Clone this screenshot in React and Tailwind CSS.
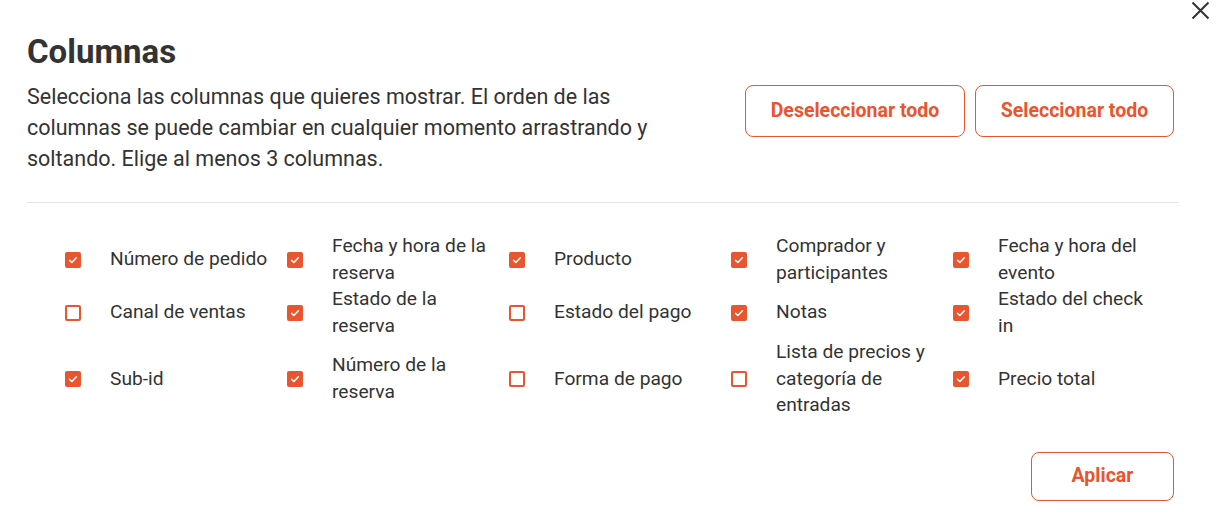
const columns = [
  { label: 'Número de pedido', checked: true },
  { label: 'Fecha y hora de la reserva', checked: true },
  { label: 'Producto', checked: true },
  { label: 'Comprador y participantes', checked: true },
  { label: 'Fecha y hora del evento', checked: true },
  { label: 'Canal de ventas', checked: false },
  { label: 'Estado de la reserva', checked: true },
  { label: 'Estado del pago', checked: false },
  { label: 'Notas', checked: true },
  { label: 'Estado del check in', checked: true },
  { label: 'Sub-id', checked: true },
  { label: 'Número de la reserva', checked: true },
  { label: 'Forma de pago', checked: false },
  { label: 'Lista de precios y categoría de entradas', checked: false },
  { label: 'Precio total', checked: true },
];

function Checkbox({ checked }) {
  if (checked) {
    return (
      <span className="flex h-4 w-4 shrink-0 items-center justify-center rounded-[2px] bg-[#e8552f]">
        <svg viewBox="0 0 16 16" className="h-3 w-3" fill="none" stroke="white" strokeWidth="2" strokeLinecap="round" strokeLinejoin="round">
          <path d="M3.5 8.5l3 2.8 6-6.3" />
        </svg>
      </span>
    );
  }
  return <span className="h-4 w-4 shrink-0 rounded-[2px] border-2 border-[#e8552f] bg-white" />;
}

export default function App() {
  return (
    <div className="relative h-[519px] w-[1217px] bg-white font-['Roboto',sans-serif] text-[#333]">
      <button className="absolute left-[1191px] top-[1px] text-[#333]">
        <svg width="19" height="19" viewBox="0 0 19 19" fill="none" stroke="currentColor" strokeWidth="2">
          <path d="M1.5 1.5l16 16M17.5 1.5l-16 16" />
        </svg>
      </button>

      <div className="pl-[27px] pr-[38px] pt-[32px]">
        <h1 className="text-[33px] font-bold leading-[40px] text-[#333]">Columnas</h1>

        <div className="mt-[9px] flex items-start justify-between">
          <p className="w-[650px] text-[21.5px] leading-[31px]">
            Selecciona las columnas que quieres mostrar. El orden de las columnas se puede cambiar en cualquier momento arrastrando y soltando. Elige al menos 3 columnas.
          </p>
          <div className="mr-[5px] mt-[4px] flex gap-[10px]">
            <button className="h-[52px] w-[220px] rounded-[8px] border border-[#e8552f] text-[19.5px] font-bold text-[#e8552f]">
              Deseleccionar todo
            </button>
            <button className="h-[52px] w-[199px] rounded-[8px] border border-[#e8552f] text-[19.5px] font-bold text-[#e8552f]">
              Seleccionar todo
            </button>
          </div>
        </div>

        <div className="mt-[28px] border-t border-[#e3e3e3]" />

        <div className="ml-[38px] mt-[30px] grid grid-cols-[repeat(5,222px)]">
          {columns.map((c) => (
            <div key={c.label} className="flex items-center">
              <Checkbox checked={c.checked} />
              <span className="ml-[29px] w-[160px] text-[19.2px] leading-[26.5px]">{c.label}</span>
            </div>
          ))}
        </div>

        <div className="mt-[33px] flex justify-end">
          <button className="mr-[5px] h-[49px] w-[143px] rounded-[8px] border border-[#e8552f] text-[19.5px] font-bold text-[#e8552f]">
            Aplicar
          </button>
        </div>
      </div>
    </div>
  );
}
